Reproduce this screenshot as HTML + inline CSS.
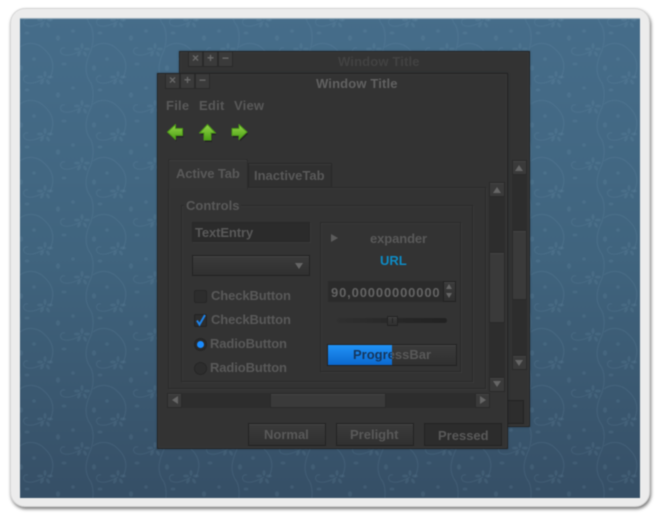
<!DOCTYPE html>
<html><head><meta charset="utf-8"><style>
html,body{margin:0;padding:0;width:660px;height:520px;background:#fff;overflow:hidden}
*{box-sizing:border-box}
#w{position:absolute;left:0;top:0;width:660px;height:520px;filter:blur(.4px)}
.a{position:absolute}
.t{position:absolute;font:bold 13px "Liberation Sans",sans-serif;color:#595959;white-space:nowrap;line-height:16px}
.win{position:absolute;background:#333;border:1px solid #232323;box-shadow:0 0 2px rgba(20,30,40,.4), inset 0 0 0 1px #393939}
.wb{position:absolute;top:0;width:15px;height:15px;background:#3a3a3a;border:1px solid #2a2a2a;border-top:0;color:#6a6a6a;font:bold 12px/13px "Liberation Sans",sans-serif;text-align:center}
.btn{position:absolute;background:linear-gradient(#3b3b3b,#303030);border:1px solid #222;box-shadow:inset 0 1px 0 #424242}
.frame{position:absolute;border:1px solid #2a2a2a;box-shadow:1px 1px 0 #3a3a3a,inset 1px 1px 0 #393939}
.sb{position:absolute;background:#3a3a3a;border:1px solid #2a2a2a;box-shadow:inset 0 1px 0 #434343}
.tr{position:absolute;background:#2d2d2d}
</style></head><body><div id="w">
<div class="a" style="left:10px;top:8px;width:640px;height:499px;background:#ececec;border-radius:15px;border:1px solid #d6d6d6;box-shadow:1px 2px 3px rgba(0,0,0,.55)"></div>
<svg class="a" style="left:20px;top:18px" width="620" height="480" viewBox="0 0 620 480">
<defs>
<linearGradient id="g" x1="0" y1="0" x2="0" y2="1"><stop offset="0" stop-color="#466d8a"/><stop offset=".5" stop-color="#40647e"/><stop offset="1" stop-color="#364f66"/></linearGradient>
<g id="v">
<g fill="none" stroke="#7ea3bd" stroke-width="1" opacity=".14">
<path d="M48 26C56 20 66 22 72 28C80 35 84 44 78 57"/>
<path d="M37 29C30 33 22 36 17 33C14 30 16 26 20 27"/>
<path d="M44 2C49 8 50 22 44 34C40 44 40 52 44 59"/>
<path d="M73 0C66 4 58 7 53 4C50 1 52 -3 56 -2"/>
</g>
<g fill="#7ea3bd" opacity=".13">
<ellipse cx="37" cy="25" rx="1.500" ry="3"/><ellipse cx="32" cy="28" rx="3" ry="1.500"/><ellipse cx="42" cy="28" rx="3" ry="1.500"/><ellipse cx="34" cy="33" rx="1.500" ry="2.800" transform="rotate(30 34 33)"/><ellipse cx="40" cy="33" rx="1.500" ry="2.800" transform="rotate(-30 40 33)"/>
<ellipse cx="73" cy="-4" rx="1.500" ry="3"/><ellipse cx="68" cy="-1" rx="3" ry="1.500"/><ellipse cx="78" cy="-1" rx="3" ry="1.500"/><ellipse cx="70" cy="4" rx="1.500" ry="2.800" transform="rotate(30 70 4)"/><ellipse cx="76" cy="4" rx="1.500" ry="2.800" transform="rotate(-30 76 4)"/>
<ellipse cx="49" cy="47" rx="2" ry="2.800"/><ellipse cx="13" cy="17" rx="2" ry="2.800"/><ellipse cx="55" cy="12" rx="2.500" ry="1.500"/><ellipse cx="19" cy="43" rx="2.500" ry="1.500"/><circle cx="28" cy="10" r="1.800"/><circle cx="62" cy="38" r="1.800"/>
</g>
</g>
<pattern id="p" width="73" height="57" patternUnits="userSpaceOnUse" x="25" y="3">
<use href="#v"/><use href="#v" x="-73"/><use href="#v" y="-57"/><use href="#v" y="57"/><use href="#v" x="-73" y="57"/><use href="#v" x="-73" y="-57"/>
</pattern>
</defs>
<rect width="620" height="480" fill="url(#g)"/>
<rect width="620" height="480" fill="url(#p)"/>
<rect width="620" height="1" fill="#9aaebb"/>
</svg>

<!-- back window -->
<div class="win" style="left:179px;top:51px;width:351px;height:376px"></div>
<div class="wb" style="left:188px;top:52px">×</div><div class="wb" style="left:203px;top:52px">+</div><div class="wb" style="left:218px;top:52px">−</div>
<div class="t" style="left:338px;top:54px;color:#424242;letter-spacing:.15px">Window Title</div>
<div class="tr" style="left:512px;top:160px;width:15px;height:210px"></div>
<div class="sb" style="left:512px;top:160px;width:15px;height:15px"></div>
<div class="a" style="left:515px;top:165px;border:4.5px solid transparent;border-top:0;border-bottom:6px solid #666"></div>
<div class="sb" style="left:512px;top:230px;width:15px;height:70px"></div>
<div class="sb" style="left:512px;top:355px;width:15px;height:15px"></div>
<div class="a" style="left:515px;top:360px;border:4.5px solid transparent;border-bottom:0;border-top:6px solid #666"></div>
<div class="a" style="left:505px;top:400px;width:19px;height:24px;background:#2d2d2d;border:1px solid #222"></div>

<!-- front window -->
<div class="win" style="left:157px;top:73px;width:351px;height:376px"></div>
<div class="wb" style="left:165px;top:74px">×</div><div class="wb" style="left:180px;top:74px">+</div><div class="wb" style="left:195px;top:74px">−</div>
<div class="t" style="left:316px;top:76px;letter-spacing:.15px;color:#616161">Window Title</div>
<div class="t" style="left:166px;top:98px;letter-spacing:.25px">File</div>
<div class="t" style="left:199px;top:98px;letter-spacing:.25px">Edit</div>
<div class="t" style="left:234px;top:98px;letter-spacing:.2px">View</div>

<svg class="a" style="left:160px;top:118px" width="100" height="30" viewBox="0 0 100 30">
<defs><linearGradient id="ar" x1="0" y1="0" x2="0" y2="1"><stop offset="0" stop-color="#96d64a"/><stop offset="1" stop-color="#4a9f14"/></linearGradient></defs>
<g fill="#000" opacity=".3" transform="translate(1 2)"><path d="M7.500 14 15.500 6.500V10.500H22.500V17.500H15.500V21.500Z"/><path d="M47.500 6.500 55.500 15H51V22H44V15H39.500Z"/><path d="M87 14 79 6.500V10.500H72V17.500H79V21.500Z"/></g>
<g stroke="#4d9a18" stroke-width="1" fill="url(#ar)" stroke-linejoin="round">
<path d="M7.500 14 15.500 6.500V10.500H22.500V17.500H15.500V21.500Z"/>
<path d="M47.500 6.500 55.500 15H51V22H44V15H39.500Z"/>
<path d="M87 14 79 6.500V10.500H72V17.500H79V21.500Z"/>
</g></svg>

<!-- notebook -->
<div class="frame" style="left:168px;top:187px;width:318px;height:202px"></div>
<div class="a" style="left:248px;top:163px;width:84px;height:24px;background:#303030;border:1px solid #282828;border-bottom:0;box-shadow:inset 0 1px 0 #3a3a3a"></div>
<div class="a" style="left:168px;top:159px;width:80px;height:30px;background:#353535;border:1px solid #2c2c2c;border-bottom:0;border-radius:2px 2px 0 0;box-shadow:inset 0 1px 0 #3e3e3e"></div>
<div class="t" style="left:176px;top:166px;letter-spacing:-.1px">Active Tab</div>
<div class="t" style="left:254px;top:168px">InactiveTab</div>

<div class="frame" style="left:181px;top:205px;width:292px;height:177px"></div>
<div class="a" style="left:184px;top:200px;width:57px;height:12px;background:#333"></div>
<div class="t" style="left:186px;top:198px">Controls</div>

<div class="a" style="left:192px;top:222px;width:118px;height:20px;background:#2b2b2b;border:1px solid #282828;box-shadow:1px 1px 0 #3a3a3a"></div>
<div class="t" style="left:195px;top:225px;letter-spacing:-.1px">TextEntry</div>

<div class="btn" style="left:192px;top:255px;width:118px;height:21px"></div>
<div class="a" style="left:295px;top:263px;border:4px solid transparent;border-bottom:0;border-top:6px solid #666"></div>

<div class="a" style="left:194px;top:290px;width:13px;height:13px;background:#2d2d2d;border:1px solid #262626;border-radius:2px"></div>
<div class="t" style="left:211px;top:288px;letter-spacing:-.1px">CheckButton</div>
<div class="a" style="left:194px;top:314px;width:13px;height:13px;background:#2d2d2d;border:1px solid #222;border-radius:2px"></div>
<svg class="a" style="left:194px;top:313px" width="14" height="14" viewBox="0 0 14 14"><path d="M3 7.500 5.500 11.500 11 2" fill="none" stroke="#1e82e8" stroke-width="2"/></svg>
<div class="t" style="left:211px;top:312px;letter-spacing:-.1px">CheckButton</div>
<div class="a" style="left:194px;top:338px;width:13px;height:13px;background:#2a2a2a;border:1px solid #242424;border-radius:50%"></div>
<div class="a" style="left:197px;top:341px;width:7px;height:7px;background:#1a8cff;border-radius:50%"></div>
<div class="t" style="left:210px;top:336px;letter-spacing:-.1px">RadioButton</div>
<div class="a" style="left:194px;top:362px;width:13px;height:13px;background:#2d2d2d;border:1px solid #262626;border-radius:50%"></div>
<div class="t" style="left:210px;top:360px;letter-spacing:-.1px">RadioButton</div>

<div class="frame" style="left:320px;top:222px;width:141px;height:150px"></div>
<div class="a" style="left:331px;top:234px;border:4px solid transparent;border-right:0;border-left:7px solid #5c5c5c"></div>
<div class="t" style="left:370px;top:231px;letter-spacing:-.1px">expander</div>
<div class="t" style="left:380px;top:253px;color:#0e8bc4">URL</div>

<div class="a" style="left:328px;top:281px;width:115px;height:21px;background:#2b2b2b"></div>
<div class="t" style="left:331px;top:285px;color:#646464;letter-spacing:.85px">90,00000000000</div>
<div class="btn" style="left:443px;top:281px;width:13px;height:21px"></div>
<div class="a" style="left:446px;top:284px;border:3.500px solid transparent;border-top:0;border-bottom:5px solid #666"></div>
<div class="a" style="left:446px;top:293px;border:3.500px solid transparent;border-bottom:0;border-top:5px solid #666"></div>

<div class="a" style="left:337px;top:318px;width:110px;height:5px;background:linear-gradient(90deg,#303030,#282828 50%,#222);border-radius:3px"></div>
<div class="btn" style="left:387px;top:316px;width:11px;height:10px;border-radius:1px"></div>
<div class="a" style="left:392px;top:318px;width:1px;height:5px;background:#222"></div>

<div class="btn" style="left:327px;top:344px;width:130px;height:22px"></div>
<div class="a" style="left:328px;top:345px;width:64px;height:20px;background:linear-gradient(#2193f8,#0a68d0)"></div>
<div class="a" style="left:353px;top:347px;width:39px;height:16px;overflow:hidden"><div class="t" style="left:0;top:0;color:#15365c">ProgressBar</div></div>
<div class="a" style="left:392px;top:347px;width:50px;height:16px;overflow:hidden"><div class="t" style="left:-39px;top:0">ProgressBar</div></div>

<!-- vertical scrollbar -->
<div class="tr" style="left:489px;top:182px;width:16px;height:210px"></div>
<div class="sb" style="left:489px;top:182px;width:16px;height:15px"></div>
<div class="a" style="left:492.500px;top:187px;border:4.500px solid transparent;border-top:0;border-bottom:6px solid #666"></div>
<div class="sb" style="left:489px;top:252px;width:16px;height:71px"></div>
<div class="sb" style="left:489px;top:377px;width:16px;height:15px"></div>
<div class="a" style="left:492.500px;top:381px;border:4.500px solid transparent;border-bottom:0;border-top:6px solid #666"></div>

<!-- horizontal scrollbar -->
<div class="tr" style="left:167px;top:393px;width:323px;height:15px"></div>
<div class="sb" style="left:167px;top:393px;width:15px;height:15px"></div>
<div class="a" style="left:172px;top:396px;border:4.500px solid transparent;border-left:0;border-right:6px solid #666"></div>
<div class="sb" style="left:270px;top:393px;width:116px;height:15px"></div>
<div class="sb" style="left:475px;top:393px;width:15px;height:15px"></div>
<div class="a" style="left:480px;top:396px;border:4.500px solid transparent;border-right:0;border-left:6px solid #666"></div>

<div class="btn" style="left:248px;top:423px;width:78px;height:23px"></div>
<div class="t" style="left:264px;top:427px">Normal</div>
<div class="btn" style="left:336px;top:423px;width:78px;height:23px"></div>
<div class="t" style="left:350px;top:427px">Prelight</div>
<div class="a" style="left:424px;top:423px;width:78px;height:23px;background:#2c2c2c;border:1px solid #222"></div>
<div class="t" style="left:438px;top:428px">Pressed</div>
</div></body></html>
